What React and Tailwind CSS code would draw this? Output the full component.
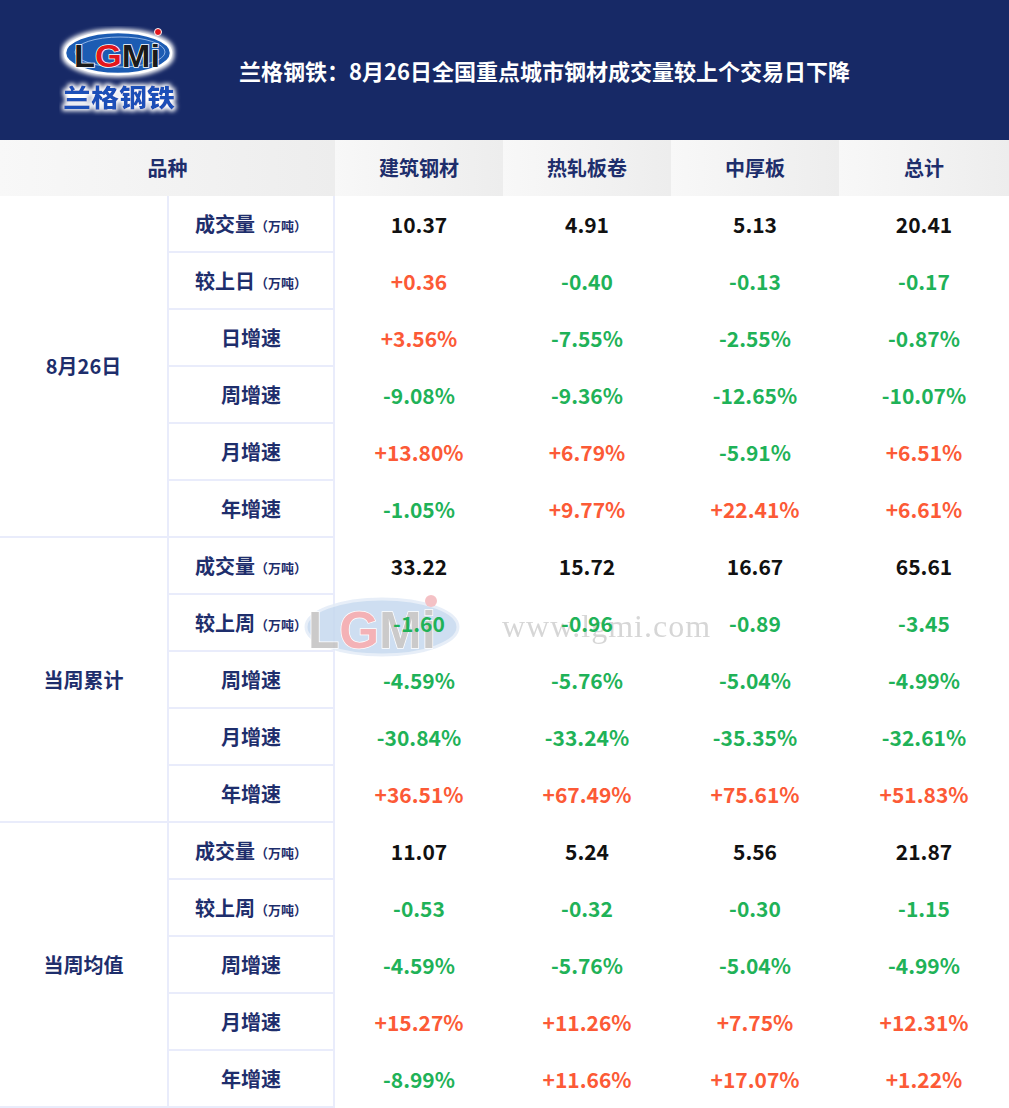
import React from 'react';

const groups = [
  {
    name: '8月26日',
    rows: [
      ['成交量', true, ['10.37', '4.91', '5.13', '20.41']],
      ['较上日', true, ['+0.36', '-0.40', '-0.13', '-0.17']],
      ['日增速', false, ['+3.56%', '-7.55%', '-2.55%', '-0.87%']],
      ['周增速', false, ['-9.08%', '-9.36%', '-12.65%', '-10.07%']],
      ['月增速', false, ['+13.80%', '+6.79%', '-5.91%', '+6.51%']],
      ['年增速', false, ['-1.05%', '+9.77%', '+22.41%', '+6.61%']],
    ],
  },
  {
    name: '当周累计',
    rows: [
      ['成交量', true, ['33.22', '15.72', '16.67', '65.61']],
      ['较上周', true, ['-1.60', '-0.96', '-0.89', '-3.45']],
      ['周增速', false, ['-4.59%', '-5.76%', '-5.04%', '-4.99%']],
      ['月增速', false, ['-30.84%', '-33.24%', '-35.35%', '-32.61%']],
      ['年增速', false, ['+36.51%', '+67.49%', '+75.61%', '+51.83%']],
    ],
  },
  {
    name: '当周均值',
    rows: [
      ['成交量', true, ['11.07', '5.24', '5.56', '21.87']],
      ['较上周', true, ['-0.53', '-0.32', '-0.30', '-1.15']],
      ['周增速', false, ['-4.59%', '-5.76%', '-5.04%', '-4.99%']],
      ['月增速', false, ['+15.27%', '+11.26%', '+7.75%', '+12.31%']],
      ['年增速', false, ['-8.99%', '+11.66%', '+17.07%', '+1.22%']],
    ],
  },
];

const heads = ['建筑钢材', '热轧板卷', '中厚板', '总计'];

const valueColor = (v, i) => {
  if (i === 0) return 'text-[#111111]';
  if (v.startsWith('+')) return 'text-[#fc5a36]';
  return 'text-[#1fb258]';
};

const Logo = () => (
  <svg width="124" height="90" viewBox="0 0 124 90">
    <defs>
      <filter id="glow" x="-20%" y="-30%" width="140%" height="160%">
        <feMorphology in="SourceAlpha" operator="dilate" radius="1.5" result="d" />
        <feGaussianBlur in="d" stdDeviation="2" result="b" />
        <feFlood floodColor="#ffffff" />
        <feComposite in2="b" operator="in" result="w" />
        <feMerge>
          <feMergeNode in="w" />
          <feMergeNode in="SourceGraphic" />
        </feMerge>
      </filter>
    </defs>
    <g filter="url(#glow)">
      <ellipse cx="59" cy="27" rx="53" ry="21" fill="#1c5bb3" stroke="#ffffff" strokeWidth="2.5" />
      <ellipse cx="61" cy="26" rx="45" ry="15" fill="none" stroke="#8fb4e6" strokeWidth="1" />
    </g>
    <text x="15" y="41" fontFamily="Liberation Sans, Arial, sans-serif" fontWeight="700" fontSize="32" textLength="86" lengthAdjust="spacingAndGlyphs" stroke="#ffffff" strokeWidth="1.5" paintOrder="stroke">
      <tspan fill="#1a1a1a">L</tspan>
      <tspan fill="#e3161c">G</tspan>
      <tspan fill="#1a1a1a">Mi</tspan>
    </text>
    <circle cx="99" cy="6" r="3.5" fill="#e3161c" stroke="#ffffff" strokeWidth="1" />
    <g filter="url(#glow)">
      <text x="4" y="81" fontFamily="'Noto Sans CJK SC', sans-serif" fontWeight="900" fontSize="25" textLength="112" lengthAdjust="spacingAndGlyphs" fill="#1d4fb8">
        兰格钢铁
      </text>
    </g>
  </svg>
);

const Watermark = () => (
  <div className="absolute left-[298px] top-[591px] flex items-center gap-[34px] pointer-events-none opacity-85">
    <svg width="170" height="70" viewBox="0 0 170 70">
      <ellipse cx="84" cy="36" rx="76" ry="28" fill="#c6d9ef" stroke="#e3ecf7" strokeWidth="3" />
      <text x="10" y="57" fontFamily="Liberation Sans, Arial, sans-serif" fontWeight="700" fontSize="52" textLength="128" lengthAdjust="spacingAndGlyphs" stroke="#ffffff" strokeWidth="1.5" paintOrder="stroke">
        <tspan fill="#c3c1c1">L</tspan>
        <tspan fill="#f3a5aa">G</tspan>
        <tspan fill="#c3c1c1">Mi</tspan>
      </text>
      <circle cx="133" cy="10" r="6" fill="#f3b7bb" />
    </svg>
    <span className="text-[32px] text-[#d0d0d0] tracking-[1px]" style={{ fontFamily: "'Liberation Serif', serif" }}>
      www.lgmi.com
    </span>
  </div>
);

export default function App() {
  return (
    <div className="relative w-[1009px] bg-white" style={{ fontFamily: "'Noto Sans CJK SC', 'Noto Sans', sans-serif" }}>
      {/* header */}
      <div className="h-[140px] bg-[#172966] flex items-center">
        <div className="ml-[59px] mt-[2px]">
          <Logo />
        </div>
        <h1 className="ml-[56px] text-white text-[22px] font-bold">
          兰格钢铁：8月26日全国重点城市钢材成交量较上个交易日下降
        </h1>
      </div>

      {/* column heads */}
      <div className="flex h-[56px] text-[20px] font-bold text-[#1e2e6c]">
        <div className="w-[335px] flex items-center justify-center bg-linear-to-r from-[#f8f8f8] to-[#ededed]">品种</div>
        {heads.map((h, i) => (
          <div
            key={h}
            className={`${i === 3 ? 'flex-1' : 'w-[168px]'} flex items-center justify-center bg-linear-to-r from-[#f8f8f8] to-[#ededed]`}
          >
            {h}
          </div>
        ))}
      </div>

      <Watermark />

      {/* body */}
      {groups.map((g) => (
        <div key={g.name} className="flex">
          <div className="w-[167px] flex items-center justify-center border-b-2 border-[#e9ecfb] text-[20px] font-bold text-[#1e2e6c]">
            {g.name}
          </div>
          <div className="flex-1">
            {g.rows.map(([label, unit, vals], ri) => (
              <div key={label + ri} className="flex h-[57px]">
                <div className="w-[168px] flex items-center justify-center border-x-2 border-b-2 border-[#e9ecfb] text-[#1e2e6c] font-bold">
                  <span className="relative z-10 text-[20px]">{label}</span>
                  {unit && <span className="relative z-10 text-[13px] mt-[4px]">（万吨）</span>}
                </div>
                {vals.map((v, vi) => (
                  <div
                    key={vi}
                    className={`${vi === 3 ? 'flex-1' : 'w-[168px]'} flex items-center justify-center text-[21px] font-bold ${valueColor(v, ri)}`}
                  >
                    <span className="relative z-10">{v}</span>
                  </div>
                ))}
              </div>
            ))}
          </div>
        </div>
      ))}
    </div>
  );
}
